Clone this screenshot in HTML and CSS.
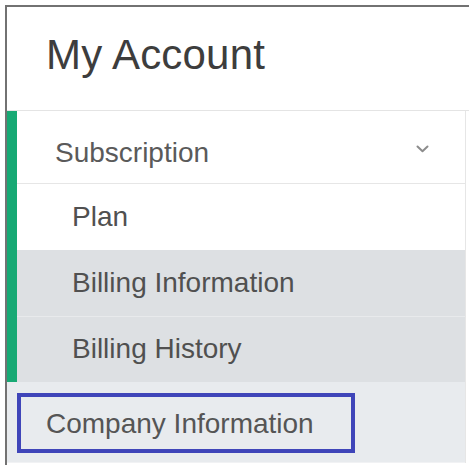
FILE: index.html
```html
<!DOCTYPE html>
<html lang="en">
<head>
<meta charset="utf-8">
<title>My Account</title>
<link rel="stylesheet" href="styles.css">
</head>
<body>
  <div class="panel">
    <header class="panel-head">
      <h1 class="panel-title">My Account</h1>
    </header>
    <nav class="menu">
      <div class="group">
        <div class="row row-parent">
          <span>Subscription</span>
          <svg class="chevron" width="13" height="8" viewBox="0 0 13 8" aria-hidden="true">
            <path d="M1.5 1.5 L6.5 6.2 L11.5 1.5" fill="none" stroke="#8c8c8c" stroke-width="2" stroke-linecap="round" stroke-linejoin="round"/>
          </svg>
        </div>
        <a class="row row-sub row-plan">Plan</a>
        <a class="row row-sub row-shaded row-info">Billing Information</a>
        <a class="row row-sub row-shaded row-history">Billing History</a>
      </div>
      <div class="row row-company">
        <a class="company-link">Company Information</a>
      </div>
    </nav>
  </div>
</body>
</html>
```

FILE: styles.css
```css
html, body {
  margin: 0;
  padding: 0;
  background: #ffffff;
}

body {
  font-family: "Liberation Sans", Arial, Helvetica, sans-serif;
  color: #4f4f4f;
}

.panel {
  margin: 5px 0 0 5px;
  border-top: 2px solid #727272;
  border-left: 2px solid #727272;
  height: 460px;
  box-sizing: border-box;
}

.panel-head {
  height: 104px;
  box-sizing: border-box;
  padding: 27px 0 0 39px;
  border-bottom: 1px solid #e4e4e4;
}

.panel-title {
  margin: 0;
  font-size: 42px;
  line-height: 42px;
  font-weight: normal;
  color: #3d3d3d;
  letter-spacing: 0.2px;
}

.menu {
  margin-right: 3px;
  border-right: 1px solid #e6e6e6;
}

.group {
  border-left: 10px solid #17a974;
}

.row {
  display: block;
  box-sizing: border-box;
  font-size: 28px;
  line-height: 32px;
  color: #505050;
}

.row-parent {
  display: flex;
  justify-content: space-between;
  align-items: flex-start;
  height: 73px;
  padding: 26px 0 0 38px;
  border-bottom: 1px solid #e6e6e6;
  color: #5a5a5a;
}

.chevron {
  margin: 8px 36px 0 0;
}

.row-sub {
  padding-left: 55px;
}

.row-plan {
  height: 66px;
  padding-top: 17px;
  background: #ffffff;
}

.row-shaded {
  background: #dde0e3;
}

.row-info {
  height: 67px;
  padding-top: 17px;
  border-bottom: 1px solid #e8eaec;
}

.row-history {
  height: 65px;
  padding-top: 16px;
}

.row-company {
  height: 81px;
  padding: 11px 0 0 10px;
  background: #e8ebee;
  border-bottom: 1px solid #f1f2f4;
}

.company-link {
  display: inline-block;
  box-sizing: border-box;
  width: 338px;
  height: 60px;
  padding: 11px 0 0 25px;
  border: 4px solid #3f45b9;
  color: #555555;
}
```
